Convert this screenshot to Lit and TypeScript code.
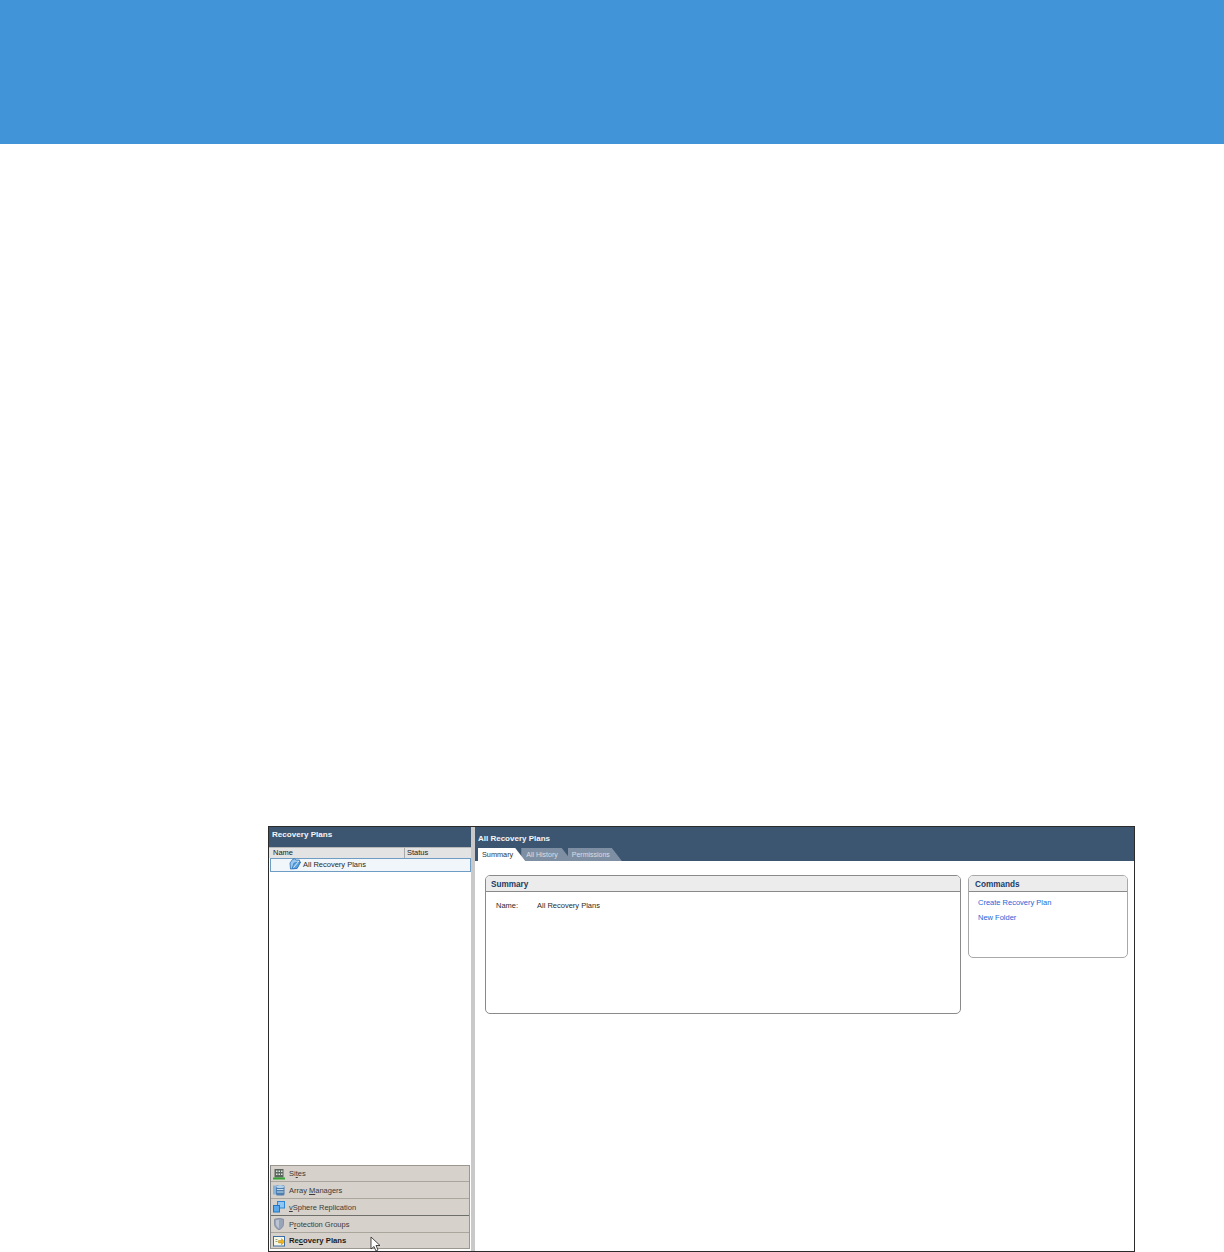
import { LitElement, html, css, svg } from "lit";
import { customElement } from "lit/decorators.js";

const sitesIcon = svg`<svg class="ico" viewBox="0 0 12 12"><rect x="1.500" y="1" width="9" height="8.500" fill="#5c6660"/><path d="M3 2.500h1.500v1.500H3zM5.500 2.500H7v1.500H5.500zM8 2.500h1.500v1.500H8zM3 5.500h1.500V7H3zM5.500 5.500H7V7H5.500zM8 5.500h1.500V7H8z" fill="#dfe5df"/><rect x="0" y="9.500" width="12" height="2" fill="#35a535"/></svg>`;
const arrayIcon = svg`<svg class="ico" viewBox="0 0 12 12"><rect x="0" y="1.500" width="3" height="9" fill="#86b4d8"/><rect x="3" y="1" width="8.500" height="10.500" rx="1.500" fill="#4e7fae"/><ellipse cx="7.200" cy="2.500" rx="4" ry="1.500" fill="#b4d2ea"/><path d="M4 5.500h6.500M4 8h6.500" stroke="#c8deef" stroke-width="1"/></svg>`;
const replIcon = svg`<svg class="ico" viewBox="0 0 12 12"><rect x="4.500" y="0.500" width="7" height="6.500" fill="#8fc6f2" stroke="#2f86d6"/><rect x="0.500" y="4.500" width="6" height="6.500" fill="#5ba9ea" stroke="#2475c4"/></svg>`;
const shieldIcon = svg`<svg class="ico" viewBox="0 0 12 12"><path d="M1.500 1.200 6 .3l4.500.9v5C10.500 9 8 10.800 6 11.800 4 10.800 1.500 9 1.500 6.200z" fill="#97a3b8" stroke="#76829a" stroke-width=".7"/><path d="M3 2.300 6 1.700v8.500C4.500 9.300 3 8 3 6z" fill="#bcc4d2"/></svg>`;
const planIcon = svg`<svg class="ico" viewBox="0 0 12 12"><rect x=".5" y="1.500" width="11" height="9.500" fill="#f6f7e6" stroke="#3c6ea5"/><path d="M5.500 5.500h3V3.500l3 3.200-3 3.200V8h-3z" fill="#eeb21d" stroke="#a87a10" stroke-width=".4"/><path d="M2.500 4.500h2M2.500 6.500h2" stroke="#7a8a6a" stroke-width=".8"/></svg>`;
const folderIcon = svg`<svg class="ico folder" viewBox="0 0 12 12"><path d="M1 5 1.500 11 8 10.500 11.500 4 10 3.800 10.500 2 7 2 5.500.8 3.500 1.500z" fill="#9cc8ee" stroke="#2a6fb4" stroke-width=".8"/><path d="M3 10.500 5 5l6.500-1L8 10.500z" fill="#5aa2e0" stroke="#2a6fb4" stroke-width=".6"/><path d="M4.500 9.500 10 3" stroke="#e9f4fc" stroke-width=".9"/></svg>`;

@customElement("app-root")
export class AppRoot extends LitElement {
  static styles = css`
    :host { display: block; width: 1224px; height: 1252px; overflow: hidden; background: #fff; font-family: "Liberation Sans", Arial, sans-serif; font-size: 7.5px; color: #2a2a2a; }
    .banner { height: 144px; background: #4194d8; }
    .shot-wrap { padding: 682px 0 0 268px; }
    .shot { position: relative; width: 865px; height: 424px; border: 1px solid #2b2b2b; border-bottom-width: 2px; display: flex; background: #fff; }
    .left { width: 202px; display: flex; flex-direction: column; }
    .split { width: 4px; background: #c9c9c9; }
    .right { flex: 1; display: flex; flex-direction: column; min-width: 0; }
    .pane-title { height: 20px; background: #3c5570; color: #f4f6f8; font-weight: 700; display: flex; align-items: center; padding: 0 0 5px 3px; box-sizing: border-box; font-size: 8.1px; }
    .cols { height: 11px; display: flex; background: #e3e3e3; border-top: 1px solid #b8b8b8; box-sizing: border-box; line-height: 10px; }
    .cols div { padding-left: 4px; color: #222; }
    .cols .c1 { width: 136px; border-right: 1px solid #a8a8a8; box-sizing: border-box; }
    .cols .c2 { padding-left: 2px; }
    .row { height: 14px; box-sizing: border-box; border: 1px solid #6f9cc2; background: #f0f6fa; display: flex; align-items: center; padding: 0 0 1px 18px; gap: 2px; margin-left: 1px; }
    .list { flex: 1; }
    .ico { width: 12px; height: 12px; flex: none; }
    .folder { margin-top: -1px; }
    .nav { background: #d6d1ca; border: 1px solid #9a978f; border-left-color: #8a8a8a; margin: 0 1px 2px 1px; }
    .nav-item { height: 16px; display: flex; align-items: center; gap: 4px; padding-left: 2px; border-bottom: 1px solid #a9a69e; color: #3a3a3a; }
    .nav-item:first-child { height: 15px; }
    .nav-item:last-child { border-bottom: 0; height: 15px; font-weight: 700; color: #1c1c1c; font-size: 7.7px; }
    .nav-item.strong { border-bottom-color: #6e6e6a; }
    .right-head { height: 34px; background: #3c5570; position: relative; }
    .right-title { color: #f4f6f8; font-weight: 700; padding: 7px 0 0 3px; line-height: 10px; font-size: 8px; }
    .tabs { position: absolute; left: 0; bottom: 0; height: 13px; display: flex; line-height: 13px; font-size: 7px; }
    .tab { height: 13px; padding: 0 12px 0 4px; margin-right: -4px; background: #7f8fa3; color: #d8dfe6; clip-path: polygon(0 0, calc(100% - 10px) 0, 100% 100%, 0 100%); }
    .tab.on { background: #fff; color: #333; z-index: 2; }
    .tab.first { border-left: 3px solid #3c5570; padding-left: 4px; font-size: 7.3px; }
    .tab.second { padding: 0 14px 0 5px; }
    .body { flex: 1; display: flex; gap: 7px; align-items: flex-start; padding: 14px 6px 0 10px; }
    .box { border: 1px solid #8a8a8a; border-radius: 5px; overflow: hidden; box-sizing: border-box; }
    .sum { width: 476px; height: 139px; }
    .cmd { width: 160px; height: 83px; border-color: #a8a8a8; }
    .box-h { height: 16px; box-sizing: border-box; background: #ececec; border-bottom: 1px solid #8a8a8a; color: #1b3a66; font-weight: 700; padding-left: 5px; line-height: 17px; font-size: 8.2px; }
    .cmd .box-h { padding-left: 6px; }
    .kv { display: flex; padding: 9px 0 0 10px; line-height: 10px; }
    .kv span:first-child { width: 41px; }
    .links { padding: 6px 0 0 9px; display: flex; flex-direction: column; gap: 5px; line-height: 10px; color: #1e66d8; }
    .cursor { position: absolute; left: 101px; top: 410px; width: 11px; height: 15px; }
  `;
  render() {
    return html`
      <div class="banner"></div>
      <div class="shot-wrap">
        <div class="shot">
          <div class="left">
            <div class="pane-title">Recovery Plans</div>
            <div class="cols"><div class="c1">Name</div><div class="c2">Status</div></div>
            <div class="row">${folderIcon}<span>All Recovery Plans</span></div>
            <div class="list"></div>
            <div class="nav">
              <div class="nav-item">${sitesIcon}<span>Si<u>t</u>es</span></div>
              <div class="nav-item">${arrayIcon}<span>Array <u>M</u>anagers</span></div>
              <div class="nav-item strong">${replIcon}<span><u>v</u>Sphere Replication</span></div>
              <div class="nav-item">${shieldIcon}<span>P<u>r</u>otection Groups</span></div>
              <div class="nav-item">${planIcon}<span>Re<u>c</u>overy Plans</span></div>
            </div>
          </div>
          <div class="split"></div>
          <div class="right">
            <div class="right-head">
              <div class="right-title">All Recovery Plans</div>
              <div class="tabs">
                <div class="tab on first">Summary</div>
                <div class="tab second">All History</div>
                <div class="tab">Permissions</div>
              </div>
            </div>
            <div class="body">
              <div class="box sum">
                <div class="box-h">Summary</div>
                <div class="kv"><span>Name:</span><span>All Recovery Plans</span></div>
              </div>
              <div class="box cmd">
                <div class="box-h">Commands</div>
                <div class="links"><span>Create Recovery Plan</span><span>New Folder</span></div>
              </div>
            </div>
          </div>
          <svg class="cursor" viewBox="0 0 11 15"><path d="M1 0v12l3-2.500 2 4.500 2-1-2-4.500h4z" fill="#fff" stroke="#222" stroke-width=".8"/></svg>
        </div>
      </div>
    `;
  }
}
